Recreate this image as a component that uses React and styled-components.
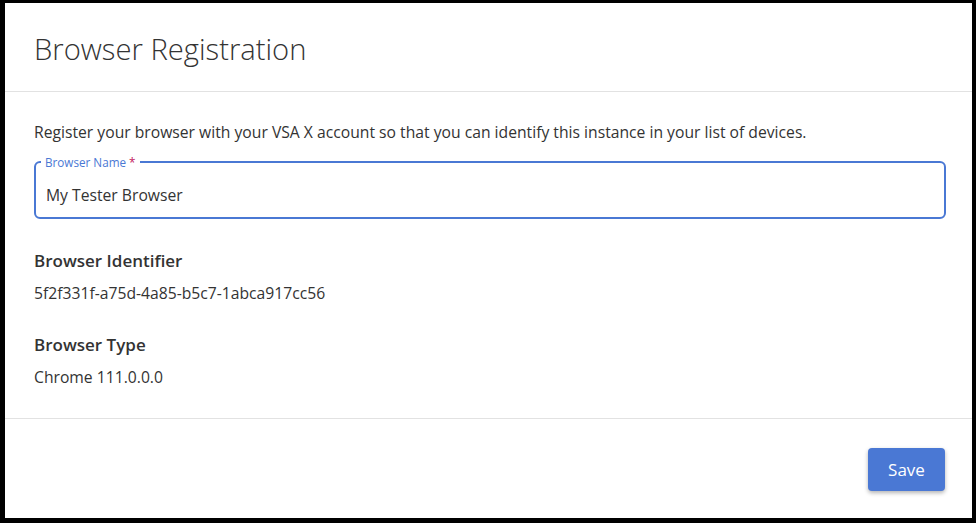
import React, { useState } from 'react'
import styled, { createGlobalStyle } from 'styled-components'

const GlobalStyle = createGlobalStyle`
    html, body {
        margin: 0;
        padding: 0;
        background: #000000;
    }
    body {
        font-family: 'Open Sans', 'Noto Sans', sans-serif;
        color: #333333;
    }
`

const Frame = styled.div`
    margin: 3px 4px 5px 5px;
    height: 515px;
    background: #ffffff;
    display: flex;
    flex-direction: column;
`

const Header = styled.div`
    height: 89px;
    box-sizing: border-box;
    padding: 26px 29px 0 29px;
    border-bottom: 1px solid #e2e2e2;
`

const Title = styled.h1`
    margin: 0;
    font-size: 29.2px;
    font-weight: 300;
    line-height: 40px;
    color: #333333;
`

const Body = styled.div`
    flex: 1;
    padding: 29px 26px 0 29px;
    border-bottom: 1px solid #e2e2e2;
`

const Intro = styled.p`
    margin: 0 0 13px 0;
    font-size: 15.7px;
    line-height: 22px;
`

const Outline = styled.fieldset`
    margin: 0;
    padding: 0 10px;
    height: 63px;
    box-sizing: border-box;
    border: 2px solid #4a78d4;
    border-radius: 6px;
`

const Legend = styled.legend`
    padding: 0 4px;
    margin-left: -5px;
    font-size: 11.7px;
    line-height: 12px;
    color: #4a78d4;
`

const Required = styled.span`
    color: #c2185b;
`

const TextInput = styled.input`
    display: block;
    width: 100%;
    height: 22px;
    margin: 16px 0 0 0;
    padding: 0;
    border: none;
    outline: none;
    font-family: 'Open Sans', 'Noto Sans', sans-serif;
    font-size: 15.7px;
    line-height: 22px;
    color: #333333;
    background: transparent;
    caret-color: #333333;
`

const Field = styled.div`
    margin-top: ${p => p.$top}px;
`

const FieldLabel = styled.div`
    font-size: 17px;
    font-weight: 600;
    line-height: 22px;
    color: #333333;
`

const FieldValue = styled.div`
    margin-top: 10px;
    font-size: 15.7px;
    line-height: 22px;
    color: #333333;
`

const Footer = styled.div`
    height: 99px;
    box-sizing: border-box;
    padding: 29px 27px 0 0;
    display: flex;
    justify-content: flex-end;
    align-items: flex-start;
`

const SaveButton = styled.button`
    width: 77px;
    height: 43px;
    border: none;
    border-radius: 4px;
    background: #4a78d4;
    color: #ffffff;
    font-family: 'Open Sans', 'Noto Sans', sans-serif;
    font-size: 17px;
    box-shadow: 0 2px 4px rgba(0, 0, 0, 0.3);
    cursor: pointer;
`

const App = () => {
    const [name, setName] = useState('My Tester Browser')

    return (
        <>
            <GlobalStyle />
            <Frame>
                <Header>
                    <Title>Browser Registration</Title>
                </Header>
                <Body>
                    <Intro>Register your browser with your VSA X account so that you can identify this instance in your list of devices.</Intro>
                    <Outline>
                        <Legend>Browser Name <Required>*</Required></Legend>
                        <TextInput value={name} onChange={(e) => setName(e.target.value)} autoFocus />
                    </Outline>
                    <Field $top={31}>
                        <FieldLabel>Browser Identifier</FieldLabel>
                        <FieldValue>5f2f331f-a75d-4a85-b5c7-1abca917cc56</FieldValue>
                    </Field>
                    <Field $top={30}>
                        <FieldLabel>Browser Type</FieldLabel>
                        <FieldValue>Chrome 111.0.0.0</FieldValue>
                    </Field>
                </Body>
                <Footer>
                    <SaveButton>Save</SaveButton>
                </Footer>
            </Frame>
        </>
    )
}

export default App
